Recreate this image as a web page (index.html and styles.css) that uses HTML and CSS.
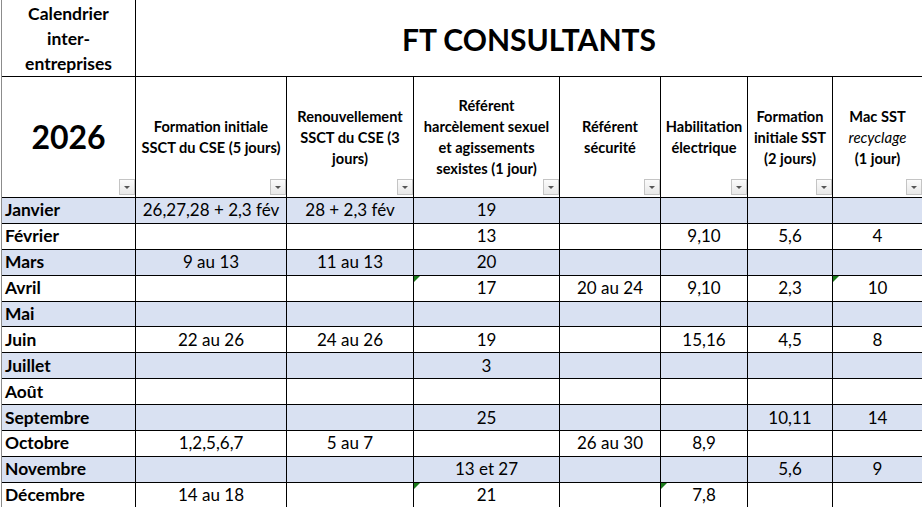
FILE: index.html
```html
<!DOCTYPE html>
<html lang="fr">
<head>
<meta charset="utf-8">
<title>Calendrier inter-entreprises 2026</title>
<link rel="stylesheet" href="styles.css">
</head>
<body>
<div class="sheet">
  <div class="cell corner"><span class="txt">Calendrier<br>inter-<br>entreprises</span></div>
  <div class="cell title">FT CONSULTANTS</div>

  <div class="cell head year"><span class="txt">2026</span><span class="filter"></span></div>
  <div class="cell head"><span class="txt">Formation initiale<br>SSCT du CSE (5 jours)</span><span class="filter"></span></div>
  <div class="cell head"><span class="txt">Renouvellement<br>SSCT du CSE (3<br>jours)</span><span class="filter"></span></div>
  <div class="cell head"><span class="txt">Référent<br>harcèlement sexuel<br>et agissements<br>sexistes (1 jour)</span><span class="filter"></span></div>
  <div class="cell head"><span class="txt">Référent<br>sécurité</span><span class="filter"></span></div>
  <div class="cell head"><span class="txt">Habilitation<br>électrique</span><span class="filter"></span></div>
  <div class="cell head"><span class="txt">Formation<br>initiale SST<br>(2 jours)</span><span class="filter"></span></div>
  <div class="cell head"><span class="txt">Mac SST<br><i>recyclage</i><br>(1 jour)</span><span class="filter"></span></div>

  <div class="cell month band">Janvier</div><div class="cell band">26,27,28 + 2,3 fév</div><div class="cell band">28 + 2,3 fév</div><div class="cell band">19</div><div class="cell band"></div><div class="cell band"></div><div class="cell band"></div><div class="cell band"></div>

  <div class="cell month">Février</div><div class="cell"></div><div class="cell"></div><div class="cell">13</div><div class="cell"></div><div class="cell">9,10</div><div class="cell">5,6</div><div class="cell">4</div>

  <div class="cell month band">Mars</div><div class="cell band">9 au 13</div><div class="cell band">11 au 13</div><div class="cell band">20</div><div class="cell band"></div><div class="cell band"></div><div class="cell band"></div><div class="cell band"></div>

  <div class="cell month">Avril</div><div class="cell"></div><div class="cell"></div><div class="cell note">17</div><div class="cell">20 au 24</div><div class="cell">9,10</div><div class="cell">2,3</div><div class="cell note">10</div>

  <div class="cell month band">Mai</div><div class="cell band"></div><div class="cell band"></div><div class="cell band"></div><div class="cell band"></div><div class="cell band"></div><div class="cell band"></div><div class="cell band"></div>

  <div class="cell month">Juin</div><div class="cell">22 au 26</div><div class="cell">24 au 26</div><div class="cell">19</div><div class="cell"></div><div class="cell">15,16</div><div class="cell">4,5</div><div class="cell">8</div>

  <div class="cell month band">Juillet</div><div class="cell band"></div><div class="cell band"></div><div class="cell band">3</div><div class="cell band"></div><div class="cell band"></div><div class="cell band"></div><div class="cell band"></div>

  <div class="cell month">Août</div><div class="cell"></div><div class="cell"></div><div class="cell"></div><div class="cell"></div><div class="cell"></div><div class="cell"></div><div class="cell"></div>

  <div class="cell month band">Septembre</div><div class="cell band"></div><div class="cell band"></div><div class="cell band">25</div><div class="cell band"></div><div class="cell band"></div><div class="cell band">10,11</div><div class="cell band">14</div>

  <div class="cell month">Octobre</div><div class="cell">1,2,5,6,7</div><div class="cell">5 au 7</div><div class="cell"></div><div class="cell">26 au 30</div><div class="cell">8,9</div><div class="cell"></div><div class="cell"></div>

  <div class="cell month band">Novembre</div><div class="cell band"></div><div class="cell band"></div><div class="cell band">13 et 27</div><div class="cell band"></div><div class="cell band"></div><div class="cell band">5,6</div><div class="cell band">9</div>

  <div class="cell month">Décembre</div><div class="cell">14 au 18</div><div class="cell"></div><div class="cell note">21</div><div class="cell"></div><div class="cell note">7,8</div><div class="cell"></div><div class="cell"></div>
</div>
</body>
</html>
```

FILE: styles.css
```css
html, body {
  margin: 0;
  padding: 0;
  background: #ffffff;
  overflow: hidden;
}

body {
  width: 922px;
  height: 507px;
  font-family: Lato, "Open Sans", sans-serif;
  color: #000;
}

.sheet {
  display: grid;
  grid-template-columns: 133px 150px 126px 145px 100px 86px 84px 89px;
  grid-template-rows: 76px 120px repeat(12, 24.9px);
  gap: 1px;
  background: #000;
  margin-left: 1px;
  border-left: 1px solid #8c8c8c;
  width: max-content;
}

.cell {
  background: #ffffff;
  display: flex;
  align-items: center;
  justify-content: center;
  text-align: center;
  font-size: 17px;
  line-height: 20px;
  white-space: nowrap;
  position: relative;
  box-sizing: border-box;
}

.txt {
  display: block;
}

.band {
  background: #d9e1f2;
}

.corner {
  font-weight: 700;
  font-size: 17.5px;
  line-height: 25px;
}

.title {
  grid-column: 2 / -1;
  font-weight: 700;
  font-size: 30px;
  padding-top: 2px;
}

.head {
  font-weight: 700;
  font-size: 14.6px;
  line-height: 21px;
}

.head i {
  font-weight: 400;
  font-size: 15px;
}

.year {
  font-size: 32px;
  line-height: 36px;
}

.month {
  justify-content: flex-start;
  padding-left: 3px;
  font-weight: 700;
  font-size: 17.4px;
}

.filter {
  position: absolute;
  right: 0;
  bottom: 2px;
  width: 16px;
  height: 16px;
  box-sizing: border-box;
  border: 1px solid #c4c4c4;
  background: linear-gradient(#fbfbfb, #e8e8e8);
}

.filter::after {
  content: "";
  position: absolute;
  left: 4px;
  top: 6px;
  border-left: 3px solid transparent;
  border-right: 3px solid transparent;
  border-top: 3px solid #555;
}

.note::before {
  content: "";
  position: absolute;
  left: 0;
  top: 0;
  border-top: 6px solid #1a7a1a;
  border-right: 6px solid transparent;
}
```
